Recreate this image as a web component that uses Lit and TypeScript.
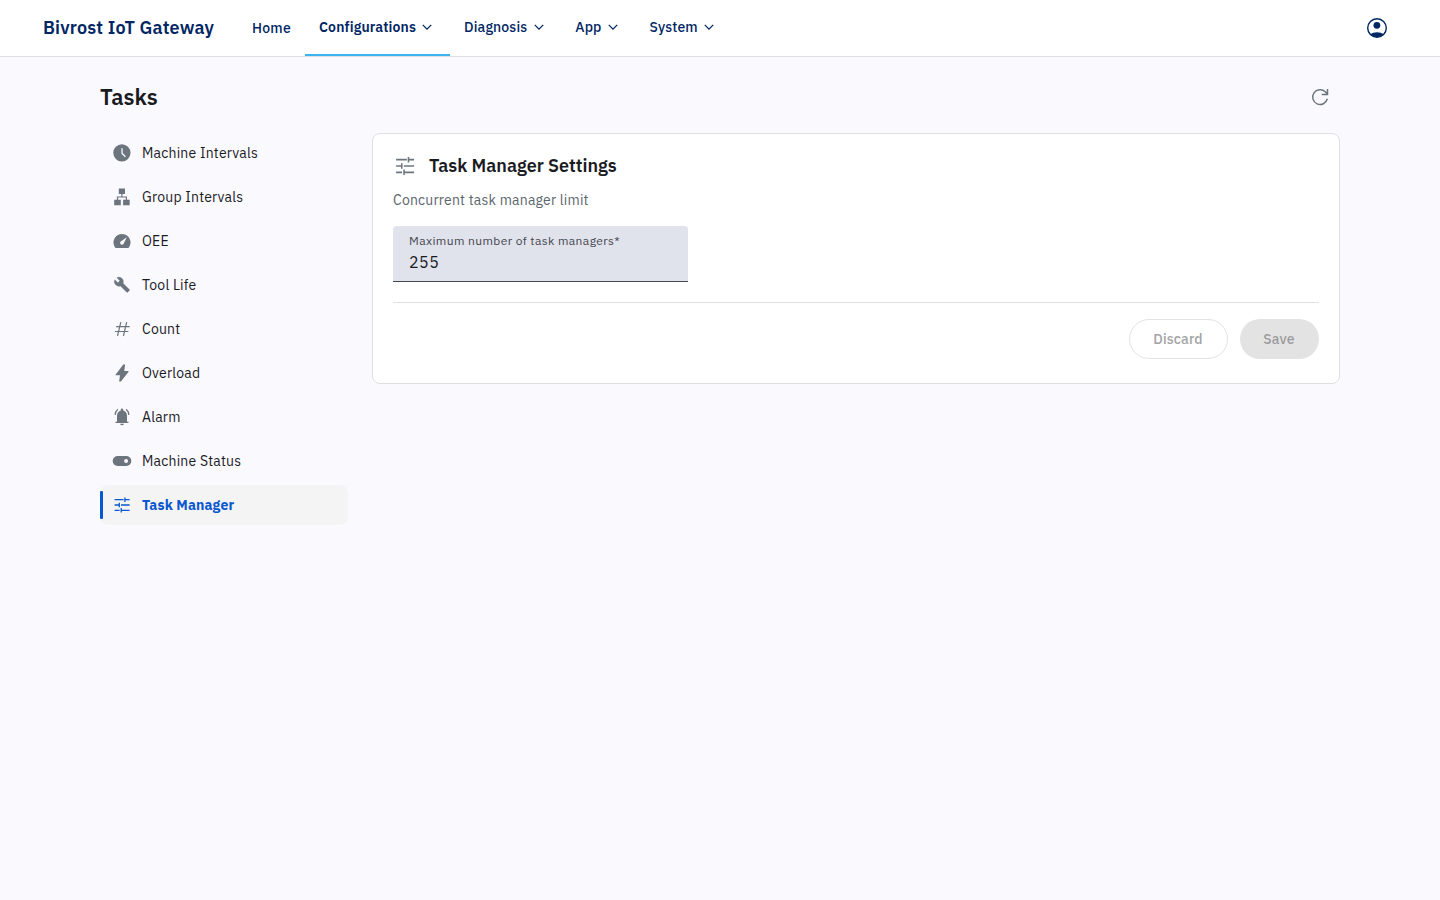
import { LitElement, html, css, svg } from "lit";
import { customElement, property, state } from "lit/decorators.js";

const glyphs: Record<string, unknown> = {
  clock: svg`<circle cx="9.9" cy="9.9" r="8.6" fill="currentColor"/><path d="M10 5.2v5l3.4 3.5" fill="none" stroke="var(--cut)" stroke-width="1.3"/>`,
  sitemap: svg`<path fill="currentColor" d="M6.8 1.4h6.2v5.7H6.8zM2.2 12.7h6.6v5.6H2.2zM11.1 12.7h6.6v5.6h-6.6z"/><path d="M9.9 7v3M5.5 13V10h8.9v3" fill="none" stroke="currentColor" stroke-width="1.2"/>`,
  gauge: svg`<path fill="currentColor" d="M4.2 17C3.6 17 3.1 16.8 2.800 16.200A8.600 8.600 0 1 1 17.200 16.200C16.900 16.800 16.400 17 15.800 17z"/><path fill="var(--cut)" d="M14.800 6.200l-3.200 6.500c-.6 1.100-2 1.400-2.900.6-.9-.9-.8-2.300.3-3z"/>`,
  wrench: svg`<path fill="currentColor" transform="translate(1.7 1.5) scale(.69)" d="M22.7 19l-9.100-9.100c.9-2.300.4-5-1.500-6.900-2-2-5-2.400-7.400-1.300L9 6 6 9 1.600 4.700C.4 7.100.9 10.100 2.900 12.100c1.900 1.900 4.600 2.400 6.900 1.500l9.100 9.100c.4.4 1 .4 1.400 0l2.300-2.300c.5-.4.5-1.100.1-1.400z" stroke="currentColor" stroke-width=".6"/>`,
  hash: svg`<path d="M8.800 3.200L5.500 17M14.700 3.200L11.400 17M4.100 7.700H17.700M2.900 12.500H16.400" fill="none" stroke="currentColor" stroke-width="1.200"/>`,
  bolt: svg`<path fill="currentColor" d="M11.300 1.600h1.800L12.300 8h3.700c.5 0 .7.5.4.900L8.900 18.500H7.100L8 12.300H4.100c-.5 0-.7-.5-.4-.900z"/>`,
  alarm: svg`<path fill="currentColor" d="M3.500 16v-1.300H5V8.600C5 6 6.600 4 8.800 3.400V2.600a1.200 1.200 0 0 1 2.400 0v.8C13.400 4 15 6 15 8.600v6.100h1.500V16zM8.200 16.700h3.600a1.800 1.600 0 0 1-3.600 0z"/><path d="M3.200 8.100C3.200 5.700 4 3.700 5.800 2.200M16.800 8.100c0-2.400-.8-4.400-2.600-5.900" fill="none" stroke="currentColor" stroke-width="1.200"/>`,
  toggle: svg`<rect x=".7" y="5" width="18.600" height="10" rx="5" fill="currentColor"/><circle cx="14.100" cy="10" r="2" fill="var(--cut)"/>`,
  tune: svg`<path d="M2.600 4.700h9M12.900 2.400v4.600M12.900 4.700h4.700M2.600 10h4.600M7.300 7.700v4.600M9 10h8.600M2.600 15.300h5M9.200 13v4.600M9.200 15.300h8.400" fill="none" stroke="currentColor" stroke-width="1.300"/>`,
  account: svg`<circle cx="10" cy="10" r="9.300" fill="none" stroke="currentColor" stroke-width="1.400"/><circle cx="9.900" cy="7.300" r="3.400" fill="currentColor"/><path fill="currentColor" d="M3.200 16.200C5 14.900 7.500 14.200 10 14.200s5 .7 6.800 2A9.300 9.300 0 0 1 3.200 16.200z"/>`,
  refresh: svg`<path d="M17.300 11.800A7.400 7.400 0 1 1 15.300 4.800L17.300 7M17.500 1.900v5.500h-5.800" fill="none" stroke="currentColor" stroke-width="1.500"/>`,
  chevron: svg`<path d="M5.800 7.900L10 12.100l4.200-4.200" fill="none" stroke="currentColor" stroke-width="1.300"/>`,
};

@customElement("ui-icon")
export class UiIcon extends LitElement {
  @property() name = "";
  static styles = css`
    :host { display: block; flex: none; width: 20px; height: 20px; }
    svg { display: block; width: 100%; height: 100%; overflow: visible; }
  `;
  render() {
    return html`<svg viewBox="0 0 20 20" aria-hidden="true">${glyphs[this.name]}</svg>`;
  }
}

const nav = [
  { label: "Home" },
  { label: "Configurations", menu: true, active: true },
  { label: "Diagnosis", menu: true },
  { label: "App", menu: true },
  { label: "System", menu: true },
];

const sections = [
  ["clock", "Machine Intervals"],
  ["sitemap", "Group Intervals"],
  ["gauge", "OEE"],
  ["wrench", "Tool Life"],
  ["hash", "Count"],
  ["bolt", "Overload"],
  ["alarm", "Alarm"],
  ["toggle", "Machine Status"],
  ["tune", "Task Manager"],
];

@customElement("app-root")
export class AppRoot extends LitElement {
  @state() selected = "Task Manager";

  static styles = css`
    :host {
      display: flex; flex-direction: column; min-height: 100vh; box-sizing: border-box;
      background: #faf9fe; color: #1a1b1f; --cut: #faf9fe;
      font: 400 14px/20px "IBM Plex Sans", Roboto, sans-serif;
    }
    * { box-sizing: border-box; }
    button { font: inherit; letter-spacing: inherit; color: inherit; background: none; border: 0; margin: 0; padding: 0; text-align: left; }
    header {
      height: 57px; display: flex; align-items: stretch; background: #fff;
      border-bottom: 1px solid #dfdfe2; color: #002663; padding: 0 53px 0 43px;
    }
    .brand { width: 195px; line-height: 56px; font-size: 18px; font-weight: 600; letter-spacing: .18px; white-space: nowrap; }
    nav { display: flex; flex: 1; }
    .tab { display: flex; align-items: center; padding: 0 14px; font-weight: 500; letter-spacing: .25px; }
    .tab.menu { padding-right: 12.600px; border-bottom: 2px solid transparent; letter-spacing: .14px; }
    .tab.active { border-bottom-color: #3bb4ef; font-weight: 600; }
    .tab ui-icon { margin-left: 1.400px; }
    .account { align-self: center; width: 20px; height: 20px; }
    main { width: 1240px; margin: 0 auto; display: grid; grid-template-columns: 248px 1fr; column-gap: 24px; }
    .top { grid-column: 1 / -1; height: 76px; padding: 4px 10px 0 0; display: flex; align-items: center; justify-content: space-between; }
    h1 { margin: 0; font-size: 22px; line-height: 28px; font-weight: 600; }
    .top ui-icon { color: #6c757d; }
    aside { display: flex; flex-direction: column; gap: 4px; }
    .item { height: 40px; display: flex; align-items: center; gap: 10px; padding: 0 12px; border-radius: 8px; letter-spacing: .2px; position: relative; }
    .item ui-icon { color: #6c757d; }
    .item.on { background: #f4f4f4; color: #0b57d0; font-weight: 700; letter-spacing: .14px; }
    .item.on ui-icon { color: #0b57d0; }
    .item.on::before { content: ""; position: absolute; left: 0; top: 6px; bottom: 6px; width: 3px; background: #0b57d0; border-radius: 1px; }
    .card { height: 251px; background: #fff; border: 1px solid #dfdfe2; border-radius: 8px; padding: 20px; }
    .head { display: flex; align-items: center; gap: 12px; height: 24px; }
    .head ui-icon { width: 24px; height: 24px; color: #6c757d; }
    h2 { margin: 0; font-size: 18px; line-height: 24px; font-weight: 600; }
    .note { margin: 12px 0 16px; color: #5c656e; letter-spacing: .2px; }
    .field { width: 295px; height: 56px; background: #e0e2ec; border-radius: 4px 4px 0 0; border-bottom: 1px solid #44474e; padding: 7px 16px 0; display: flex; flex-direction: column; }
    label { font-size: 12px; line-height: 16px; letter-spacing: .4px; color: #44474e; white-space: nowrap; }
    input { font: 400 16px/24px "IBM Plex Sans", Roboto, sans-serif; letter-spacing: .5px; color: #1a1b1f; border: 0; outline: 0; padding: 0; margin: 1px 0 0; width: 100%; height: 24px; background: none; }
    .actions { margin-top: 20px; border-top: 1px solid #dfdfe2; padding-top: 16px; display: flex; justify-content: flex-end; gap: 12px; }
    .btn { height: 40px; border-radius: 20px; text-align: center; font-weight: 500; letter-spacing: .14px; color: #a3a3a5; }
    .discard { width: 99px; border: 1px solid #e3e3e4; padding-right: 1px; }
    .save { width: 79px; background: #e3e3e3; color: #9b9b9d; padding-right: 1px; }
  `;

  render() {
    return html`
      <header>
        <div class="brand">Bivrost IoT Gateway</div>
        <nav>
          ${nav.map(
            (n) => html`<button class="tab ${n.menu ? "menu" : ""} ${n.active ? "active" : ""}">
              <span>${n.label}</span>${n.menu ? html`<ui-icon name="chevron"></ui-icon>` : ""}
            </button>`
          )}
        </nav>
        <ui-icon class="account" name="account"></ui-icon>
      </header>
      <main>
        <div class="top"><h1>Tasks</h1><ui-icon name="refresh"></ui-icon></div>
        <aside>
          ${sections.map(
            ([icon, label]) => html`<button
              class="item ${label === this.selected ? "on" : ""}"
              @click=${() => (this.selected = label)}
            ><ui-icon name=${icon}></ui-icon><span>${label}</span></button>`
          )}
        </aside>
        <section>
          <div class="card">
            <div class="head"><ui-icon name="tune"></ui-icon><h2>Task Manager Settings</h2></div>
            <div class="note">Concurrent task manager limit</div>
            <div class="field">
              <label for="limit">Maximum number of task managers*</label>
              <input id="limit" .value=${"255"} />
            </div>
            <div class="actions">
              <button class="btn discard">Discard</button>
              <button class="btn save">Save</button>
            </div>
          </div>
        </section>
      </main>
    `;
  }
}
